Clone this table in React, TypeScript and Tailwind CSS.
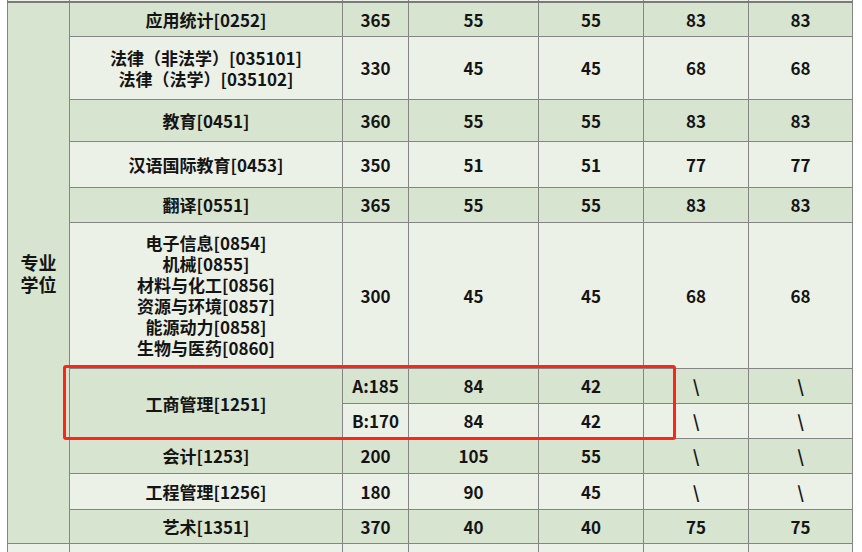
import React from "react";

type Row = {
  name?: string[];
  nameSpan?: number;
  score: string;
  a: string;
  b: string;
  c: string;
  d: string;
  dark: boolean;
  h: number;
};

const rows: Row[] = [
  { name: ["应用统计[0252]"], score: "365", a: "55", b: "55", c: "83", d: "83", dark: true, h: 34 },
  { name: ["法律（非法学）[035101]", "法律（法学）[035102]"], score: "330", a: "45", b: "45", c: "68", d: "68", dark: false, h: 63 },
  { name: ["教育[0451]"], score: "360", a: "55", b: "55", c: "83", d: "83", dark: true, h: 42 },
  { name: ["汉语国际教育[0453]"], score: "350", a: "51", b: "51", c: "77", d: "77", dark: false, h: 46 },
  { name: ["翻译[0551]"], score: "365", a: "55", b: "55", c: "83", d: "83", dark: true, h: 35 },
  {
    name: ["电子信息[0854]", "机械[0855]", "材料与化工[0856]", "资源与环境[0857]", "能源动力[0858]", "生物与医药[0860]"],
    score: "300", a: "45", b: "45", c: "68", d: "68", dark: false, h: 146,
  },
  { name: ["工商管理[1251]"], nameSpan: 2, score: "A:185", a: "84", b: "42", c: "\\", d: "\\", dark: true, h: 35 },
  { score: "B:170", a: "84", b: "42", c: "\\", d: "\\", dark: false, h: 35 },
  { name: ["会计[1253]"], score: "200", a: "105", b: "55", c: "\\", d: "\\", dark: true, h: 35 },
  { name: ["工程管理[1256]"], score: "180", a: "90", b: "45", c: "\\", d: "\\", dark: false, h: 36 },
  { name: ["艺术[1351]"], score: "370", a: "40", b: "40", c: "75", d: "75", dark: true, h: 34 },
];

const DARK = "bg-[#d7e4cf]";
const LIGHT = "bg-[#ecf1e8]";
const cell = "border border-[#858585] text-center align-middle p-0";

export default function App() {
  return (
    <div
      className="relative min-h-screen bg-white pl-[7px] text-[17px] font-bold leading-[21px] text-[#141414]"
      style={{ fontFamily: '"Noto Sans CJK SC", "Noto Sans", sans-serif' }}
    >
      <table className="table-fixed border-collapse">
        <colgroup>
          <col className="w-[62px]" />
          <col className="w-[273px]" />
          <col className="w-[66px]" />
          <col className="w-[130px]" />
          <col className="w-[105px]" />
          <col className="w-[105px]" />
          <col className="w-[104px]" />
        </colgroup>
        <tbody>
          <tr className="h-[2px]">
            {Array.from({ length: 7 }).map((_, i) => (
              <td key={i} className={`${LIGHT} border-x border-[#858585] border-b-2 border-b-[#7a7a7a] p-0`} />
            ))}
          </tr>
          {rows.map((r, i) => (
            <tr key={i} style={{ height: r.h }}>
              {i === 0 && (
                <td rowSpan={rows.length} className={`${cell} ${DARK} text-[18px] leading-[22px]`}>
                  专业
                  <br />
                  学位
                </td>
              )}
              {r.name && (
                <td rowSpan={r.nameSpan ?? 1} className={`${cell} ${r.dark ? DARK : LIGHT}`}>
                  {r.name.map((n) => (
                    <div key={n}>{n}</div>
                  ))}
                </td>
              )}
              <td className={`${cell} ${r.dark ? DARK : LIGHT}`}>{r.score}</td>
              <td className={`${cell} ${r.dark ? DARK : LIGHT}`}>{r.a}</td>
              <td className={`${cell} ${r.dark ? DARK : LIGHT}`}>{r.b}</td>
              <td className={`${cell} ${r.dark ? DARK : LIGHT}`}>{r.c}</td>
              <td className={`${cell} ${r.dark ? DARK : LIGHT}`}>{r.d}</td>
            </tr>
          ))}
          <tr className="h-[30px]">
            {Array.from({ length: 7 }).map((_, i) => (
              <td key={i} className={`${cell} ${LIGHT}`} />
            ))}
          </tr>
        </tbody>
      </table>

      {/* highlight box over 工商管理 */}
      <div className="pointer-events-none absolute left-[63px] top-[365px] h-[75px] w-[613px] rounded-[3px] border-[3px] border-[#ff2418]" />
    </div>
  );
}
